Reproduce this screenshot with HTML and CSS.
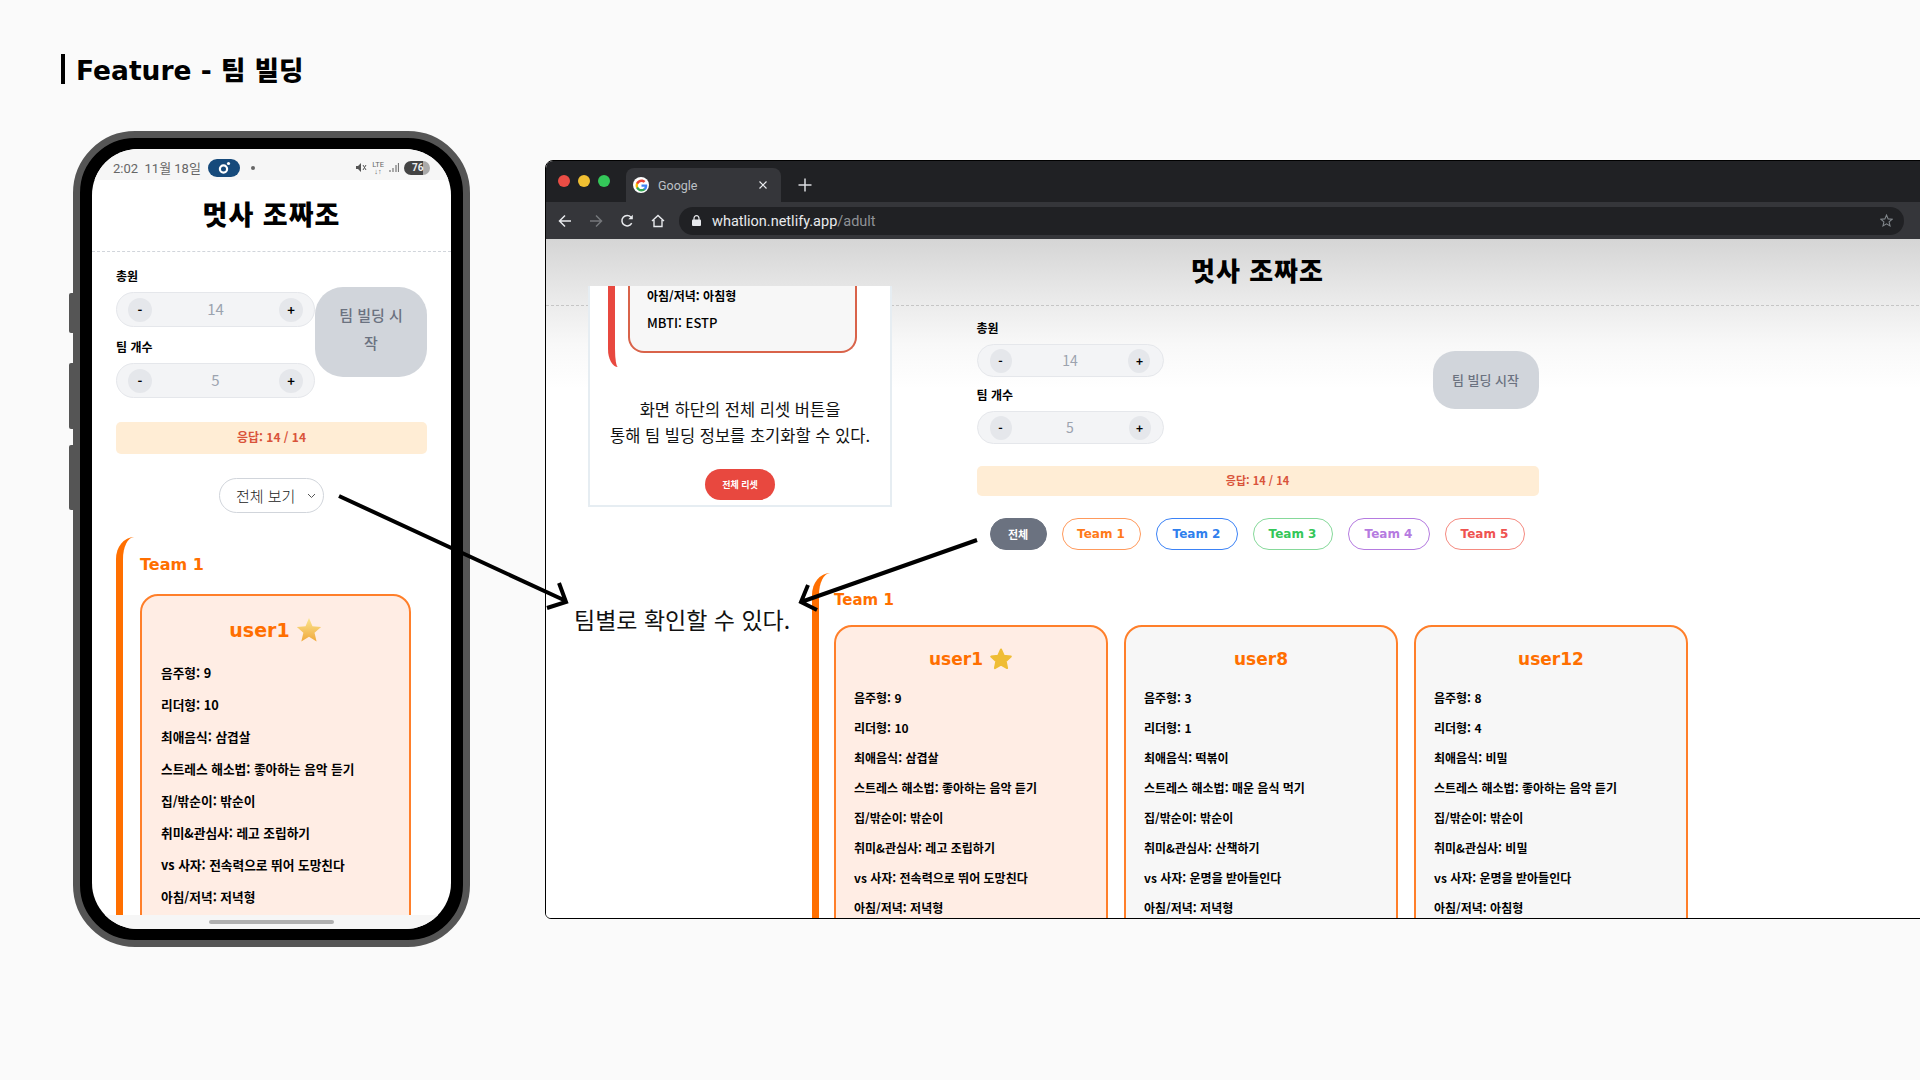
FILE: index.html
```html
<!DOCTYPE html>
<html lang="ko">
<head>
<meta charset="utf-8">
<title>Feature - 팀 빌딩</title>
<link rel="stylesheet" href="styles.css">
</head>
<body>
<div class="slide">
    <h1 class="slide-title">Feature - 팀 빌딩</h1>

    <!-- phone -->
    <div class="phone">
        <i class="side-btn side-a"></i>
        <i class="side-btn side-b"></i>
        <i class="side-btn side-c"></i>
        <div class="screen">
            <div class="status">
                <span class="status-time">2:02&nbsp; 11월 18일</span>
                <span class="status-pill">
                    <svg width="14" height="14" viewBox="0 0 14 14"><circle cx="6.5" cy="8" r="3.6" fill="none" stroke="#fff" stroke-width="2.2"/><circle cx="11.5" cy="2.5" r="1.6" fill="#fff"/></svg>
                </span>
                <span class="status-dot"></span>
                <span class="status-right">
                    <svg width="11" height="11" viewBox="0 0 11 11"><path d="M0 4h2l3-3v9L2 7H0z" fill="#555"/><path d="M7 3l3 5M10 3L7 8" stroke="#555" stroke-width="1" fill="none"/></svg>
                    <span class="status-lte">LTE<br>↓↑</span>
                    <svg width="10" height="11" viewBox="0 0 10 11"><path d="M1 10V8M4 10V6M7 10V3M9.5 10V1" stroke="#777" stroke-width="1.2" fill="none"/></svg>
                    <span class="status-batt">76</span>
                </span>
            </div>
            <div class="app app-phone">
                <div class="app-head"><h2>멋사 조짜조</h2></div>
                <div class="body-pad">
                    <div class="controls">
                        <div class="steppers">
                            <label>총원</label>
                            <div class="stepper"><b>-</b><span>14</span><b>+</b></div>
                            <label>팀 개수</label>
                            <div class="stepper"><b>-</b><span>5</span><b>+</b></div>
                        </div>
                        <button class="start">팀 빌딩 시작</button>
                    </div>
                    <div class="answered">응답: 14 / 14</div>
                    <div class="select">전체 보기
                        <svg width="9" height="6" viewBox="0 0 9 6"><path d="M1 1l3.5 3.5L8 1" fill="none" stroke="#555" stroke-width="1"/></svg>
                    </div>
                    <div class="team">
                        <h3>Team 1</h3>
                        <div class="cards">
                            <div class="card card-leader">
                                <h4>user1
                                    <svg class="star" width="26" height="26" viewBox="0 0 24 24"><defs><linearGradient id="gold" x1="0" y1="0" x2="0" y2="1"><stop offset="0" stop-color="#fbe58f"/><stop offset="1" stop-color="#f0a93c"/></linearGradient></defs><path d="M12 1l3.2 7.6 8 .7-6.1 5.3 1.9 8L12 18.2 4.9 22.6l1.9-8L.8 9.300l8-.7z" fill="url(#gold)"/></svg>
                                </h4>
                                <p>음주형: 9</p>
                                <p>리더형: 10</p>
                                <p>최애음식: 삼겹살</p>
                                <p>스트레스 해소법: 좋아하는 음악 듣기</p>
                                <p>집/밖순이: 밖순이</p>
                                <p>취미&amp;관심사: 레고 조립하기</p>
                                <p>vs 사자: 전속력으로 뛰어 도망친다</p>
                                <p>아침/저녁: 저녁형</p>
                            </div>
                        </div>
                    </div>
                </div>
            </div>
            <div class="home-bar"><i></i></div>
        </div>
    </div>

    <!-- browser -->
    <div class="browser">
        <div class="tabstrip">
            <span class="light light-r"></span>
            <span class="light light-y"></span>
            <span class="light light-g"></span>
            <div class="tab">
                <span class="favicon">
                    <svg width="13" height="13" viewBox="0 0 24 24">
                        <path d="M22.56 12.25c0-.78-.07-1.53-.2-2.25H12v4.26h5.92c-.26 1.37-1.04 2.53-2.21 3.31v2.77h3.57c2.08-1.92 3.28-4.74 3.28-8.09z" fill="#4285f4"/>
                        <path d="M12 23c2.97 0 5.46-.98 7.28-2.66l-3.57-2.77c-.98.66-2.23 1.06-3.71 1.06-2.86 0-5.29-1.93-6.16-4.53H2.18v2.84C3.99 20.53 7.7 23 12 23z" fill="#34a853"/>
                        <path d="M5.84 14.09c-.22-.66-.35-1.36-.35-2.09s.13-1.43.35-2.09V7.07H2.18C1.43 8.55 1 10.22 1 12s.43 3.45 1.18 4.93l2.85-2.22.81-.62z" fill="#fbbc05"/>
                        <path d="M12 5.38c1.62 0 3.06.56 4.21 1.64l3.15-3.15C17.45 2.09 14.97 1 12 1 7.7 1 3.99 3.47 2.18 7.07l3.66 2.84c.87-2.6 3.3-4.53 6.16-4.53z" fill="#ea4335"/>
                    </svg>
                </span>
                <span class="tab-name">Google</span>
                <svg class="tab-x" width="8" height="8" viewBox="0 0 8 8"><path d="M.5.5l7 7M7.500.5l-7 7" stroke="#e8eaed" stroke-width="1.2"/></svg>
            </div>
            <svg class="tab-new" width="14" height="14" viewBox="0 0 14 14"><path d="M7 .5v13M.5 7h13" stroke="#dadce0" stroke-width="1.500"/></svg>
        </div>
        <div class="toolbar">
            <svg class="tool" width="14" height="14" viewBox="0 0 14 14"><path d="M13 7H2M7 1.500L1.500 7 7 12.500" fill="none" stroke="#e8eaed" stroke-width="1.500"/></svg>
            <svg class="tool" width="14" height="14" viewBox="0 0 14 14"><path d="M1 7h11M7 1.500L12.500 7 7 12.500" fill="none" stroke="#75777b" stroke-width="1.500"/></svg>
            <svg class="tool" width="14" height="14" viewBox="0 0 14 14"><path d="M11.700 9.200A5.200 5.200 0 1 1 11 3.200" fill="none" stroke="#e8eaed" stroke-width="1.500"/><path d="M12.800 .8v4.500H8.300z" fill="#e8eaed"/></svg>
            <svg class="tool" width="14" height="14" viewBox="0 0 14 14"><path d="M1 7l6-5.500L13 7M3 6v6.500h8V6" fill="none" stroke="#e8eaed" stroke-width="1.400"/></svg>
            <div class="omnibox">
                <svg width="9" height="11" viewBox="0 0 9 11"><path d="M2 5V3.200a2.500 2.500 0 0 1 5 0V5" fill="none" stroke="#e8eaed" stroke-width="1.200"/><rect y="4.500" width="9" height="6.500" rx="1" fill="#e8eaed"/></svg>
                <span class="url">whatlion.netlify.app<em>/adult</em></span>
                <svg class="bookmark" width="13" height="13" viewBox="0 0 24 24"><path d="M12 2l3 7 7.500.7-5.700 5 1.700 7.300L12 18.200 5.500 22l1.700-7.300-5.700-5L9 9z" fill="none" stroke="#80868b" stroke-width="2"/></svg>
            </div>
        </div>
        <div class="app app-web">
            <div class="app-head"><h2>멋사 조짜조</h2></div>
            <div class="center-col">
                <div class="controls">
                    <div class="steppers">
                        <label>총원</label>
                        <div class="stepper"><b>-</b><span>14</span><b>+</b></div>
                        <label>팀 개수</label>
                        <div class="stepper"><b>-</b><span>5</span><b>+</b></div>
                    </div>
                    <button class="start">팀 빌딩 시작</button>
                </div>
                <div class="answered">응답: 14 / 14</div>
                <div class="pills">
                    <span class="pill pill-all">전체</span>
                    <span class="pill pill-1">Team 1</span>
                    <span class="pill pill-2">Team 2</span>
                    <span class="pill pill-3">Team 3</span>
                    <span class="pill pill-4">Team 4</span>
                    <span class="pill pill-5">Team 5</span>
                </div>
            </div>
            <div class="team">
                <h3>Team 1</h3>
                <div class="cards">
                    <div class="card card-leader">
                        <h4>user1
                            <svg class="star" width="24" height="24" viewBox="0 0 24 24"><path d="M12 2.500l2.900 6.300 6.900.8-5.100 4.700 1.400 6.800-6.100-3.400-6.100 3.400 1.400-6.800-5.100-4.700 6.900-.8z" fill="#efbd35" stroke="#efbd35" stroke-width="2" stroke-linejoin="round"/></svg>
                        </h4>
                        <p>음주형: 9</p>
                        <p>리더형: 10</p>
                        <p>최애음식: 삼겹살</p>
                        <p>스트레스 해소법: 좋아하는 음악 듣기</p>
                        <p>집/밖순이: 밖순이</p>
                        <p>취미&amp;관심사: 레고 조립하기</p>
                        <p>vs 사자: 전속력으로 뛰어 도망친다</p>
                        <p>아침/저녁: 저녁형</p>
                    </div>
                    <div class="card">
                        <h4>user8</h4>
                        <p>음주형: 3</p>
                        <p>리더형: 1</p>
                        <p>최애음식: 떡볶이</p>
                        <p>스트레스 해소법: 매운 음식 먹기</p>
                        <p>집/밖순이: 밖순이</p>
                        <p>취미&amp;관심사: 산책하기</p>
                        <p>vs 사자: 운명을 받아들인다</p>
                        <p>아침/저녁: 저녁형</p>
                    </div>
                    <div class="card">
                        <h4>user12</h4>
                        <p>음주형: 8</p>
                        <p>리더형: 4</p>
                        <p>최애음식: 비밀</p>
                        <p>스트레스 해소법: 좋아하는 음악 듣기</p>
                        <p>집/밖순이: 밖순이</p>
                        <p>취미&amp;관심사: 비밀</p>
                        <p>vs 사자: 운명을 받아들인다</p>
                        <p>아침/저녁: 아침형</p>
                    </div>
                </div>
            </div>
        </div>
    </div>

    <!-- crop of the bottom of the page, laid over the browser -->
    <div class="inset">
        <div class="inset-team">
            <div class="inset-card">
                <p>아침/저녁: 아침형</p>
                <p class="inset-mbti">MBTI: ESTP</p>
            </div>
        </div>
        <p class="inset-text">화면 하단의 전체 리셋 버튼을<br>통해 팀 빌딩 정보를 초기화할 수 있다.</p>
        <button class="reset">전체 리셋</button>
    </div>

    <p class="caption">팀별로 확인할 수 있다.</p>

    <svg class="arrows" width="1920" height="1080" viewBox="0 0 1920 1080">
        <path d="M339 496L566 601M559 583L566 602L547 608" />
        <path d="M977 540L801 602M808 585L801 602L817 610" />
    </svg>
</div>
</body>
</html>
```

FILE: styles.css
```css
* {
    box-sizing: border-box;
}

body {
    margin: 0;
    font-family: "Noto Sans CJK KR", sans-serif;
    background: #fafafa;
}

h1, h2, h3, h4, p {
    margin: 0;
}

.slide {
    position: relative;
    width: 1920px;
    height: 1080px;
    overflow: hidden;
    background: #fafafa;
}

.slide-title {
    position: absolute;
    left: 61px;
    top: 54px;
    height: 30px;
    padding-left: 11px;
    border-left: 4px solid #000;
    font-family: "DejaVu Sans", "Noto Sans CJK KR", sans-serif;
    font-size: 26.500px;
    font-weight: 900;
    line-height: 34px;
    color: #000;
}

/* phone */
.phone {
    position: absolute;
    left: 73px;
    top: 131px;
    width: 397px;
    height: 816px;
    padding: 11px 12px 11px 12px;
    background: #000;
    border: 7px solid #555;
    border-radius: 62px;
}

.side-btn {
    position: absolute;
    left: -11px;
    width: 4px;
    background: #555;
    border-radius: 2px 0 0 2px;
}

.side-a { top: 155px; height: 40px; }
.side-b { top: 225px; height: 66px; }
.side-c { top: 307px; height: 65px; }

.screen {
    display: flex;
    flex-direction: column;
    width: 100%;
    height: 100%;
    overflow: hidden;
    background: #fff;
    border-radius: 46px;
}

.status {
    display: flex;
    align-items: center;
    flex: none;
    height: 31px;
    padding: 6px 21px 0 21px;
    background: #f6f6f6;
    font-family: "Roboto", sans-serif;
    font-size: 13px;
    color: #666;
}

.status-time {
    font-family: "Roboto", "Noto Sans CJK KR", sans-serif;
    white-space: nowrap;
}

.status-pill {
    display: flex;
    align-items: center;
    justify-content: center;
    width: 32px;
    height: 18px;
    margin-left: 7px;
    background: #164a7b;
    border-radius: 9px;
}

.status-dot {
    width: 4px;
    height: 4px;
    margin-left: 11px;
    background: #666;
    border-radius: 50%;
}

.status-right {
    display: flex;
    align-items: center;
    gap: 5px;
    margin-left: auto;
}

.status-lte {
    font-size: 7.500px;
    line-height: 7px;
    text-align: center;
}

.status-batt {
    width: 26px;
    height: 14px;
    padding-left: 8px;
    background: linear-gradient(90deg, #444 72%, #aaa 72%);
    border-radius: 7px;
    font-size: 10px;
    font-weight: 700;
    line-height: 14px;
    color: #eee;
}

.app {
    overflow: hidden;
    color: #000;
}

.app-phone {
    flex: 1;
    min-height: 0;
}

.app-head {
    display: flex;
    align-items: center;
    justify-content: center;
    padding-bottom: 4px;
    border-bottom: 1.5px dashed #d1d5db;
}

.app-head h2 {
    font-weight: 900;
    font-size: 27px;
    letter-spacing: 1px;
    line-height: 36px;
}

.app-phone .app-head {
    height: 72px;
}

.body-pad {
    padding: 15px 24px 0;
}

.controls {
    display: flex;
    align-items: center;
}

.steppers label {
    display: block;
    height: 18px;
    font-size: 12px;
    font-weight: 700;
    line-height: 18px;
}

.stepper {
    display: flex;
    align-items: center;
    justify-content: space-between;
    background: #f3f4f6;
    border: 1px solid #e5e7eb;
    border-radius: 18px;
}

.stepper b {
    display: flex;
    align-items: center;
    justify-content: center;
    background: #e5e7eb;
    border-radius: 50%;
    font-size: 13px;
    font-weight: 700;
}

.stepper span {
    padding-bottom: 2px;
    font-size: 15px;
    color: #9ca3af;
}

.start {
    border: none;
    background: #d1d5db;
    font-family: "Noto Sans CJK KR", sans-serif;
    font-weight: 500;
    color: #6b7280;
}

.answered {
    background: #ffedd5;
    border-radius: 5px;
    text-align: center;
    font-size: 12px;
    font-weight: 700;
    color: #d9533a;
}

/* phone sizes */
.app-phone .steppers {
    width: 199px;
    flex: none;
}

.app-phone .steppers label { margin-bottom: 7px; }
.app-phone .stepper { height: 35px; padding: 0 11px; }
.app-phone .stepper + label { margin-top: 11px; }
.app-phone .stepper b { width: 24px; height: 24px; }

.app-phone .start {
    width: 112px;
    height: 90px;
    margin-bottom: 2px;
    padding: 0 20px 5px;
    border-radius: 28px;
    font-size: 15px;
    line-height: 28px;
}

.app-phone .answered {
    height: 32px;
    margin-top: 24px;
    line-height: 30px;
}

.select {
    display: flex;
    align-items: center;
    justify-content: space-between;
    width: 105px;
    height: 35px;
    margin: 24px auto 0;
    padding: 0 7px 0 16px;
    background: #fff;
    border: 1px solid #d1d5db;
    border-radius: 18px;
    font-size: 15px;
    font-weight: 300;
    color: #222;
    white-space: nowrap;
}

.team {
    border-left: 7px solid #ff6f00;
    border-top-left-radius: 18px 22px;
}

.team h3 {
    height: 20px;
    font-family: "DejaVu Sans", sans-serif;
    font-size: 15px;
    font-weight: 700;
    line-height: 20px;
    color: #ff6f00;
}

.app-phone .team {
    margin-top: 24px;
    padding: 18px 0 0 17px;
}

.app-phone .team h3 {
    margin-bottom: 19px;
    font-size: 16px;
}

.cards {
    display: flex;
}

/* the bottom of a card always runs past the crop */
.card {
    flex: none;
    padding: 0 18px 60px;
    background: #f7f7f7;
    border: 2px solid #ff7f2a;
    border-radius: 18px;
    font-weight: 700;
}

.card-leader {
    background: #ffede4;
}

.card h4 {
    display: flex;
    align-items: center;
    justify-content: center;
    gap: 6px;
    height: 28px;
    font-family: "DejaVu Sans", sans-serif;
    font-weight: 700;
    color: #ff6f00;
}

.app-phone .card {
    width: 271px;
    padding: 0 19px 60px;
}

.app-phone .card h4 {
    margin: 20px 0 13px;
    font-size: 19px;
}

.app-phone .card p {
    height: 32px;
    font-size: 12.700px;
    line-height: 32px;
    white-space: nowrap;
}

.home-bar {
    display: flex;
    align-items: center;
    justify-content: center;
    flex: none;
    height: 14px;
    background: #f6f6f6;
}

.home-bar i {
    width: 125px;
    height: 4px;
    background: #b0b0b0;
    border-radius: 2px;
}

/* browser */
.browser {
    position: absolute;
    left: 545px;
    top: 160px;
    display: flex;
    flex-direction: column;
    width: 1425px;
    height: 759px;
    overflow: hidden;
    background: #fff;
    border: 1px solid #000;
    border-radius: 8px 0 0 6px;
}

.tabstrip {
    display: flex;
    align-items: flex-end;
    flex: none;
    position: relative;
    height: 41px;
    padding-left: 80px;
    background: #202124;
}

.light {
    position: absolute;
    top: 14px;
    width: 12px;
    height: 12px;
    border-radius: 50%;
}

.light-r { left: 12px; background: #ea4d45; }
.light-y { left: 32px; background: #f0bf32; }
.light-g { left: 52px; background: #34c759; }

.tab {
    display: flex;
    align-items: center;
    width: 155px;
    height: 34px;
    padding: 0 14px 0 7px;
    background: #35363a;
    border-radius: 8px 8px 0 0;
}

.favicon {
    display: flex;
    align-items: center;
    justify-content: center;
    width: 16px;
    height: 16px;
    background: #fff;
    border-radius: 50%;
}

.tab-name {
    margin-left: 9px;
    font-family: "Roboto", sans-serif;
    font-size: 12.500px;
    color: #bdc1c6;
}

.tab-x {
    margin-left: auto;
}

.tab-new {
    align-self: center;
    margin: 7px 0 0 17px;
}

.toolbar {
    display: flex;
    align-items: center;
    flex: none;
    gap: 17px;
    height: 37px;
    padding-left: 12px;
    background: #35363a;
}

.omnibox {
    display: flex;
    align-items: center;
    flex: none;
    width: 1225px;
    height: 28px;
    margin-left: -3px;
    padding: 0 11px 0 13px;
    background: #202124;
    border-radius: 14px;
}

.url {
    margin-left: 11px;
    padding-top: 1px;
    font-family: "Roboto", sans-serif;
    font-size: 14.500px;
    color: #e8eaed;
}

.url em {
    font-style: normal;
    color: #8f9296;
}

.bookmark {
    margin-left: auto;
}

.app-web {
    flex: 1;
    min-height: 0;
    background: linear-gradient(#d5d5d5, #ececec 66px, #f8f8f8 105px, #fff 150px);
}

.app-web .app-head {
    height: 67px;
    border-bottom-color: #c6c6c6;
}

.app-web .app-head h2 {
    font-size: 26px;
}

.center-col {
    width: 562px;
    margin: 0 auto;
    padding-top: 13px;
}

.app-web .controls {
    justify-content: space-between;
}

.app-web .steppers {
    width: 187px;
}

.app-web .steppers label { margin-bottom: 7px; }
.app-web .stepper { height: 33px; padding: 0 12px; }
.app-web .stepper + label { margin-top: 9px; }
.app-web .stepper b { width: 22px; height: 24px; font-size: 12px; }
.app-web .stepper span { font-size: 14px; }

.app-web .start {
    width: 106px;
    height: 58px;
    margin-bottom: 4px;
    padding: 0;
    border-radius: 22px;
    font-size: 13px;
}

.app-web .answered {
    height: 30px;
    margin-top: 22px;
    line-height: 28px;
    font-size: 11px;
}

.pills {
    display: flex;
    gap: 15px;
    margin-top: 22px;
    padding-left: 13px;
}

.pill {
    display: flex;
    align-items: center;
    justify-content: center;
    height: 32px;
    width: 80px;
    background: #fff;
    border: 1px solid;
    border-radius: 16px;
    font-family: "DejaVu Sans", sans-serif;
    font-size: 12px;
    font-weight: 700;
    white-space: nowrap;
}

.pill-all { width: 57px; background: #6b7280; border-color: #6b7280; color: #fff; font-family: "Noto Sans CJK KR", sans-serif; font-size: 11px; }
.pill-1 { width: 79px; color: #ff7a1a; border-color: #ff9a5c; }
.pill-2 { width: 82px; color: #2f80ed; border-color: #3b82f6; }
.pill-3 { color: #34c759; border-color: #86d99a; }
.pill-4 { width: 82px; color: #b57be0; border-color: #b57be0; }
.pill-5 { color: #ef5350; border-color: #f58a80; }

.app-web .team {
    margin: 23px 0 0 266px;
    padding: 17px 0 0 15px;
}

.app-web .team h3 { margin-bottom: 15px; }

.app-web .cards {
    gap: 16px;
}

.app-web .card {
    width: 274px;
}

.app-web .card h4 {
    margin: 18px 0 10px;
    font-size: 17px;
}

.app-web .card p {
    height: 30px;
    font-size: 12px;
    line-height: 30px;
    white-space: nowrap;
}

/* inset */
.inset {
    position: absolute;
    left: 588px;
    top: 286px;
    width: 304px;
    height: 221px;
    padding: 0 18px;
    overflow: hidden;
    background: #fff;
    border: 2px solid #e6edf2;
    border-top: none;
    text-align: center;
}

.inset-team {
    width: 100%;
    height: 81px;
    padding: 0 15px 14px 13px;
    border-left: 7px solid #e8483f;
    border-bottom-left-radius: 10px 18px;
}

.inset-card {
    height: 67px;
    padding: 0 17px;
    background: #f7f7f7;
    border: 2px solid #d9634a;
    border-top: none;
    border-radius: 0 0 16px 16px;
    font-size: 12px;
    font-weight: 700;
    text-align: left;
}

.inset-card p {
    height: 20px;
    line-height: 20px;
}

.inset-card .inset-mbti {
    margin-top: 7px;
    font-size: 13px;
    font-weight: 500;
}

.inset-text {
    margin-top: 29px;
    font-size: 16.500px;
    line-height: 26px;
    color: #111;
    white-space: nowrap;
}

.reset {
    display: block;
    width: 70px;
    height: 31px;
    margin: 21px auto 0;
    padding: 0;
    background: #e8483f;
    border: none;
    border-radius: 16px;
    font-family: "Noto Sans CJK KR", sans-serif;
    font-size: 9px;
    font-weight: 700;
    color: #fff;
}

.caption {
    position: absolute;
    left: 574px;
    top: 601px;
    font-size: 23px;
    line-height: 36px;
    color: #111;
    white-space: nowrap;
}

.arrows {
    position: absolute;
    left: 0;
    top: 0;
}

.arrows path {
    fill: none;
    stroke: #000;
    stroke-width: 4px;
}
```
